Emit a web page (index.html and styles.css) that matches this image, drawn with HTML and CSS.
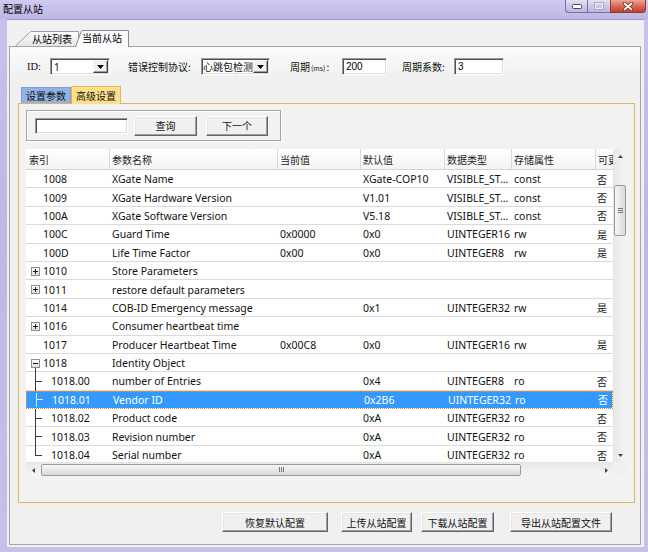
FILE: index.html
```html
<!DOCTYPE html>
<html>
<head>
<meta charset="utf-8">
<title>配置从站</title>
<link rel="stylesheet" href="styles.css">
</head>
<body>
<div class="window">
  <div class="titlebar">
    <span class="title">配置从站</span>
    <div class="controls">
      <div class="wbtn wmin"><svg width="10" height="5" viewBox="0 0 10 5"><rect x="0.5" y="0.5" width="9" height="4" rx="1" fill="#fff" stroke="#4a4768"/></svg></div>
      <div class="wbtn wmax"><svg width="10" height="8" viewBox="0 0 10 8"><rect x="0.5" y="0.5" width="9" height="7" fill="none" stroke="#a9a7c6"/><rect x="1.5" y="1.5" width="7" height="5" fill="none" stroke="#eeedf7"/></svg></div>
      <div class="wbtn wclose"><svg width="12" height="9" viewBox="0 0 12 9"><path d="M2.5 1.5 L9.5 7.5 M9.5 1.5 L2.5 7.5" stroke="#6b2a22" stroke-width="3.4" stroke-linecap="round"/><path d="M2.5 1.5 L9.5 7.5 M9.5 1.5 L2.5 7.5" stroke="#fff" stroke-width="1.8" stroke-linecap="round"/></svg></div>
    </div>
  </div>
  <div class="frame">
    <div class="client">
      <div class="otabs">
        <div class="otab otab-1">
          <svg class="tabshape" width="64" height="15" viewBox="0 0 64 15"><defs><linearGradient id="g1" x1="0" y1="0" x2="0" y2="1"><stop offset="0" stop-color="#fdfdfd"/><stop offset="1" stop-color="#e6e6e6"/></linearGradient></defs><path d="M0.5 15 L14.5 1.6 Q15.6 0.5 17 0.5 L63.5 0.5 L63.5 15" fill="url(#g1)" stroke="#9c9c9c"/></svg>
          <span class="otab-label">从站列表</span>
        </div>
        <div class="otab otab-2">
          <svg class="tabshape" width="54" height="17" viewBox="0 0 54 17"><path d="M0.5 17 L6 1.8 Q6.6 0.5 8 0.5 L53.5 0.5 L53.5 17" fill="#fbfbfb" stroke="#8a8a8a"/></svg>
          <span class="otab-label">当前从站</span>
        </div>
      </div>
      <div class="opanel">
        <div class="params">
          <span class="lbl lbl-id">ID:</span>
          <div class="sel sel1"><span class="sel-text">1</span><span class="drop"><svg width="7" height="4" viewBox="0 0 7 4"><path d="M0 0 H7 L3.5 4 Z" fill="#000"/></svg></span></div>
          <span class="lbl lbl-proto">错误控制协议:</span>
          <div class="sel sel2"><span class="sel-text cjk">心跳包检测</span><span class="drop"><svg width="7" height="4" viewBox="0 0 7 4"><path d="M0 0 H7 L3.5 4 Z" fill="#000"/></svg></span></div>
          <span class="lbl lbl-period">周期<span class="ms">(ms)</span>:</span>
          <div class="inp in1">200</div>
          <span class="lbl lbl-factor">周期系数:</span>
          <div class="inp in2">3</div>
        </div>
        <div class="itabs">
          <div class="itab itab-blue">设置参数</div>
          <div class="itab itab-yellow">高级设置</div>
        </div>
        <div class="ipanel">
          <div class="group">
            <div class="inp search"></div>
            <div class="btn btn-query">查询</div>
            <div class="btn btn-next">下一个</div>
          </div>
          <div class="lv">
            <div class="lv-top">
              <div class="lv-content">
                <div class="hdr">
                  <div class="c c1">索引</div>
                  <div class="c c2">参数名称</div>
                  <div class="c c3">当前值</div>
                  <div class="c c4">默认值</div>
                  <div class="c c5">数据类型</div>
                  <div class="c c6">存储属性</div>
                  <div class="c c7">可更改</div>
                </div>
                <div class="row"><div class="c c1">1008</div><div class="c c2">XGate Name</div><div class="c c3"></div><div class="c c4">XGate-COP10</div><div class="c c5">VISIBLE_ST...</div><div class="c c6">const</div><div class="c c7">否</div></div>
                <div class="row"><div class="c c1">1009</div><div class="c c2">XGate Hardware Version</div><div class="c c3"></div><div class="c c4">V1.01</div><div class="c c5">VISIBLE_ST...</div><div class="c c6">const</div><div class="c c7">否</div></div>
                <div class="row"><div class="c c1">100A</div><div class="c c2">XGate Software Version</div><div class="c c3"></div><div class="c c4">V5.18</div><div class="c c5">VISIBLE_ST...</div><div class="c c6">const</div><div class="c c7">否</div></div>
                <div class="row"><div class="c c1">100C</div><div class="c c2">Guard Time</div><div class="c c3">0x0000</div><div class="c c4">0x0</div><div class="c c5">UINTEGER16</div><div class="c c6">rw</div><div class="c c7">是</div></div>
                <div class="row"><div class="c c1">100D</div><div class="c c2">Life Time Factor</div><div class="c c3">0x00</div><div class="c c4">0x0</div><div class="c c5">UINTEGER8</div><div class="c c6">rw</div><div class="c c7">是</div></div>
                <div class="row"><div class="c c1 t"><span class="exp plus"></span>1010</div><div class="c c2">Store Parameters</div><div class="c c3"></div><div class="c c4"></div><div class="c c5"></div><div class="c c6"></div><div class="c c7"></div></div>
                <div class="row"><div class="c c1 t"><span class="exp plus"></span>1011</div><div class="c c2">restore default parameters</div><div class="c c3"></div><div class="c c4"></div><div class="c c5"></div><div class="c c6"></div><div class="c c7"></div></div>
                <div class="row"><div class="c c1">1014</div><div class="c c2">COB-ID Emergency message</div><div class="c c3"></div><div class="c c4">0x1</div><div class="c c5">UINTEGER32</div><div class="c c6">rw</div><div class="c c7">是</div></div>
                <div class="row"><div class="c c1 t"><span class="exp plus"></span>1016</div><div class="c c2">Consumer heartbeat time</div><div class="c c3"></div><div class="c c4"></div><div class="c c5"></div><div class="c c6"></div><div class="c c7"></div></div>
                <div class="row"><div class="c c1">1017</div><div class="c c2">Producer Heartbeat Time</div><div class="c c3">0x00C8</div><div class="c c4">0x0</div><div class="c c5">UINTEGER16</div><div class="c c6">rw</div><div class="c c7">是</div></div>
                <div class="row open"><div class="c c1 t"><span class="exp"></span>1018</div><div class="c c2">Identity Object</div><div class="c c3"></div><div class="c c4"></div><div class="c c5"></div><div class="c c6"></div><div class="c c7"></div></div>
                <div class="row child"><div class="c c1">1018.00</div><div class="c c2">number of Entries</div><div class="c c3"></div><div class="c c4">0x4</div><div class="c c5">UINTEGER8</div><div class="c c6">ro</div><div class="c c7">否</div></div>
                <div class="row child sel"><div class="c c1">1018.01</div><div class="c c2">Vendor ID</div><div class="c c3"></div><div class="c c4">0x2B6</div><div class="c c5">UINTEGER32</div><div class="c c6">ro</div><div class="c c7">否</div></div>
                <div class="row child"><div class="c c1">1018.02</div><div class="c c2">Product code</div><div class="c c3"></div><div class="c c4">0xA</div><div class="c c5">UINTEGER32</div><div class="c c6">ro</div><div class="c c7">否</div></div>
                <div class="row child"><div class="c c1">1018.03</div><div class="c c2">Revision number</div><div class="c c3"></div><div class="c c4">0xA</div><div class="c c5">UINTEGER32</div><div class="c c6">ro</div><div class="c c7">否</div></div>
                <div class="row child last"><div class="c c1">1018.04</div><div class="c c2">Serial number</div><div class="c c3"></div><div class="c c4">0xA</div><div class="c c5">UINTEGER32</div><div class="c c6">ro</div><div class="c c7">否</div></div>
              </div>
              <div class="vscroll">
                <div class="sarrow"><svg width="5" height="3" viewBox="0 0 5 3"><path d="M0 3 L2.5 0 L5 3 Z" fill="#444"/></svg></div>
                <div class="vtrack"><div class="vthumb"><svg width="5" height="5" viewBox="0 0 5 5"><path d="M0 0.5 H5 M0 2.5 H5 M0 4.5 H5" stroke="#777" stroke-width="1"/></svg></div></div>
                <div class="sarrow"><svg width="5" height="3" viewBox="0 0 5 3"><path d="M0 0 L2.5 3 L5 0 Z" fill="#444"/></svg></div>
              </div>
            </div>
            <div class="lv-bottom">
              <div class="hscroll">
                <div class="sarrow h"><svg width="3" height="5" viewBox="0 0 3 5"><path d="M3 0 L0 2.5 L3 5 Z" fill="#444"/></svg></div>
                <div class="htrack"><div class="hthumb"><svg width="5" height="5" viewBox="0 0 5 5"><path d="M0.5 0 V5 M2.5 0 V5 M4.5 0 V5" stroke="#777" stroke-width="1"/></svg></div></div>
                <div class="sarrow h"><svg width="3" height="5" viewBox="0 0 3 5"><path d="M0 0 L3 2.5 L0 5 Z" fill="#444"/></svg></div>
              </div>
              <div class="corner"></div>
            </div>
          </div>
        </div>
        <div class="bbar">
          <div class="btn bb1">恢复默认配置</div>
          <div class="btn bb2">上传从站配置</div>
          <div class="btn bb3">下载从站配置</div>
          <div class="btn bb4">导出从站配置文件</div>
        </div>
      </div>
    </div>
  </div>
</div>
</body>
</html>
```
FILE: styles.css
```css
* { box-sizing: border-box; }
html, body { margin: 0; padding: 0; }
body {
  width: 648px;
  height: 552px;
  overflow: hidden;
  background: #c6c2e6;
  font-family: "Noto Sans", "Noto Sans CJK SC", sans-serif;
  font-size: 10.5px;
  color: #111;
}
.cjk { font-family: "Noto Sans CJK SC", sans-serif; font-size: 10px; }

.window {
  width: 648px;
  height: 552px;
  display: flex;
  flex-direction: column;
  background: linear-gradient(to bottom, #c8c3ec, #beb8e4 40%, #c6c1e8);
}
.titlebar {
  height: 19px;
  flex: none;
  display: flex;
  align-items: flex-start;
  background: linear-gradient(to bottom, #d0cbf0, #bdb6e5);
}
.title {
  font-family: "Noto Sans CJK SC", sans-serif;
  font-size: 10px;
  line-height: 17px;
  padding-left: 3px;
  color: #000;
}
.controls { margin-left: auto; margin-right: 2px; display: flex; }
.wbtn {
  height: 13px;
  display: flex;
  align-items: center;
  justify-content: center;
  border: 1px solid #75729a;
  border-top: none;
}
.wmin {
  width: 22px;
  border-right: none;
  border-radius: 0 0 0 4px;
  background: linear-gradient(to bottom, #e4e2f4, #cbc8e6 50%, #bdb9de);
}
.wmax {
  width: 23px;
  border-right: none;
  background: linear-gradient(to bottom, #e4e2f4, #cbc8e6 50%, #bdb9de);
}
.wclose {
  width: 36px;
  border-color: #8c3c33;
  border-radius: 0 0 4px 0;
  background: linear-gradient(to bottom, #eaa598, #d86a56 50%, #c4402c);
}

.frame {
  flex: 1;
  display: flex;
  padding: 0 4px 5px 7px;
}
.client {
  flex: 1;
  background: #f0f0f0;
  border-top: 1px solid #9d99c4;
  padding: 10px 3px 2px 2px;
  display: flex;
  flex-direction: column;
}

/* outer tabs */
.otabs {
  display: flex;
  align-items: flex-end;
  height: 17px;
  flex: none;
  margin-bottom: -1px;
  padding-left: 6px;
  position: relative;
  z-index: 1;
}
.otab {
  position: relative;
  display: flex;
  align-items: center;
  font-family: "Noto Sans CJK SC", sans-serif;
  font-size: 10px;
  color: #000;
}
.tabshape { position: absolute; left: 0; top: 0; }
.otab-label { position: relative; }
.otab-1 { width: 64px; height: 15px; margin-bottom: 1px; padding-left: 17px; }
.otab-2 { width: 54px; height: 17px; margin-left: -4px; padding-left: 7px; padding-bottom: 2px; }

.opanel {
  flex: 1;
  border: 1px solid #a5a5a5;
  background: linear-gradient(to bottom, #fbfbfb, #f0f0f0 30px);
  display: flex;
  flex-direction: column;
}

/* parameter row */
.params {
  display: flex;
  align-items: center;
  height: 17px;
  margin: 11px 0 0 17px;
}
.lbl {
  font-family: "Noto Sans CJK SC", sans-serif;
  font-size: 10px;
  color: #111;
  white-space: nowrap;
}
.lbl-id { width: 23px; font-family: "Liberation Serif", serif; font-size: 10.5px; }
.lbl-proto { width: 73px; margin-left: 18px; }
.lbl-period { width: 52px; margin-left: 20px; }
.lbl-factor { width: 52px; margin-left: 15px; }
.ms { font-size: 7px; margin: 0 1px; }

.sel, .inp {
  height: 17px;
  background: #fff;
  border: 1px solid;
  border-color: #9a9a9a #fff #fff #9a9a9a;
  box-shadow: inset 1px 1px #505050, inset -1px -1px #dcdcdc;
}
.sel { display: flex; align-items: center; }
.sel1 { width: 60px; }
.sel2 { width: 69px; }
.sel-text { flex: 1; padding-left: 3px; font-size: 10px; white-space: nowrap; }
.sel2 .sel-text { padding-left: 1px; }
.drop {
  width: 15px;
  height: 13px;
  flex: none;
  margin-right: 1px;
  background: #f0f0f0;
  border: 1px solid;
  border-color: #f8f8f8 #404040 #404040 #f8f8f8;
  box-shadow: inset -1px -1px #a0a0a0;
  display: flex;
  align-items: center;
  justify-content: center;
}
.inp {
  font-family: "Liberation Sans", sans-serif;
  font-size: 10px;
  line-height: 15px;
  padding-left: 3px;
  color: #000;
}
.in1 { width: 45px; }
.in2 { width: 50px; }

/* inner tabs */
.itabs {
  display: flex;
  align-items: flex-end;
  height: 18px;
  flex: none;
  margin: 11px 0 -1px 11px;
  position: relative;
  z-index: 1;
}
.itab {
  width: 50px;
  display: flex;
  align-items: center;
  justify-content: center;
  font-family: "Noto Sans CJK SC", sans-serif;
  font-size: 10px;
  color: #111;
  border: 1px solid;
  border-bottom: none;
}
.itab-blue { height: 16px; margin-bottom: 1px; background: #90b2e6; border-color: #7f9fd2; }
.itab-yellow { height: 18px; background: #ffdf8c; border-color: #dcb85a; }

.ipanel {
  flex: none;
  height: 400px;
  margin: 0 5px 0 8px;
  border: 1px solid #dcb85a;
  background: #f2f2f2;
  display: flex;
  flex-direction: column;
  padding: 6px 0 0 7px;
}

/* search group */
.group {
  width: 255px;
  height: 31px;
  flex: none;
  border: 1px solid #a3a3a3;
  box-shadow: inset 1px 1px #fff, 1px 1px #fff;
  display: flex;
  align-items: center;
  padding-left: 8px;
}
.search { width: 93px; height: 16px; }
.btn {
  height: 20px;
  display: flex;
  align-items: center;
  justify-content: center;
  background: #f0f0f0;
  border: 1px solid;
  border-color: #fff #656565 #656565 #fff;
  box-shadow: inset -1px -1px #a0a0a0, inset 1px 1px #e6e6e6;
  font-family: "Noto Sans CJK SC", sans-serif;
  font-size: 10px;
  color: #111;
  white-space: nowrap;
}
.btn-query { width: 63px; margin-left: 6px; }
.btn-next { width: 62px; margin-left: 9px; }

/* list view */
.lv {
  width: 601px;
  height: 327px;
  flex: none;
  margin-top: 8px;
  display: flex;
  flex-direction: column;
  background: #fff;
}
.lv-top { display: flex; height: 313px; }
.lv-content { flex: 1; overflow: hidden; }
.hdr {
  display: flex;
  height: 21px;
  background: linear-gradient(to bottom, #ffffff, #f4f4f4);
  border-bottom: 1px solid #d5d5d5;
}
.hdr .c {
  display: flex;
  align-items: center;
  font-family: "Noto Sans CJK SC", sans-serif;
  font-size: 10px;
  color: #1e1e1e;
}
.hdr .c + .c { border-left: 1px solid #d9d9d9; padding-left: 2px; }
.c {
  flex: none;
  padding-left: 3px;
  white-space: nowrap;
  overflow: hidden;
}
.c1 { width: 83px; }
.c2 { width: 168px; }
.c3 { width: 83px; }
.c4 { width: 84px; }
.c5 { width: 67px; }
.c6 { width: 84px; }
.c7 { width: 60px; }

.row {
  display: flex;
  height: 18.4px;
  box-shadow: inset 0 -1px #dadada;
}
.row .c { display: flex; align-items: center; }
.row .c1 { padding-left: 17px; }
.row .c1.t { padding-left: 5px; }
.row .c7 { font-family: "Noto Sans CJK SC", sans-serif; font-size: 10px; padding-left: 2px; }

.exp {
  width: 9px;
  height: 9px;
  flex: none;
  margin-right: 3px;
  border: 1px solid #8e8f8f;
  background:
    linear-gradient(#1a1a1a, #1a1a1a) center / 5px 1px no-repeat,
    linear-gradient(to bottom, #ffffff, #dcdcdc);
}
.exp.plus {
  background:
    linear-gradient(#1a1a1a, #1a1a1a) center / 5px 1px no-repeat,
    linear-gradient(#1a1a1a, #1a1a1a) center / 1px 5px no-repeat,
    linear-gradient(to bottom, #ffffff, #dcdcdc);
}
.row.open .c1 {
  background: linear-gradient(#3a3a3a, #3a3a3a) 9px 100% / 1px 4px no-repeat;
}
.row.child .c1 {
  padding-left: 25px;
  background:
    linear-gradient(#3a3a3a, #3a3a3a) 9px 0 / 1px 100% no-repeat,
    linear-gradient(#3a3a3a, #3a3a3a) 9px 50% / 7px 1px no-repeat;
}
.row.child.last .c1 {
  background:
    linear-gradient(#3a3a3a, #3a3a3a) 9px 0 / 1px 50% no-repeat,
    linear-gradient(#3a3a3a, #3a3a3a) 9px 50% / 7px 1px no-repeat;
}
.row.sel {
  background: #3399ff;
  color: #fff;
  box-shadow: none;
  outline: 1px dotted #c98a48;
  outline-offset: -1px;
}
.row.child.sel .c1 {
  background:
    linear-gradient(#dcebff, #dcebff) 9px 0 / 1px 100% no-repeat,
    linear-gradient(#dcebff, #dcebff) 9px 50% / 7px 1px no-repeat;
}

/* scrollbars */
.vscroll {
  width: 14px;
  flex: none;
  display: flex;
  flex-direction: column;
  background: linear-gradient(to right, #e9e9e9, #f5f5f5);
  border-left: 1px solid #e4e4e4;
}
.sarrow {
  height: 14px;
  flex: none;
  display: flex;
  align-items: center;
  justify-content: center;
}
.sarrow.h { width: 14px; height: 14px; }
.vtrack { flex: 1; padding: 22px 0 0 0; }
.vthumb {
  width: 12px;
  height: 51px;
  border: 1px solid #9a9a9a;
  border-radius: 2px;
  background: linear-gradient(to right, #f6f6f6, #e8e8e8 50%, #d8d8d8);
  display: flex;
  align-items: center;
  justify-content: center;
}
.lv-bottom { display: flex; height: 14px; flex: none; }
.hscroll {
  flex: 1;
  display: flex;
  background: linear-gradient(to bottom, #e9e9e9, #f5f5f5);
  border-top: 1px solid #e4e4e4;
}
.htrack { flex: 1; display: flex; align-items: center; padding-left: 1px; }
.hthumb {
  width: 480px;
  height: 12px;
  border: 1px solid #9a9a9a;
  border-radius: 2px;
  background: linear-gradient(to bottom, #f6f6f6, #e8e8e8 50%, #d8d8d8);
  display: flex;
  align-items: center;
  justify-content: center;
}
.corner { width: 14px; flex: none; background: #f0f0f0; }

/* bottom buttons */
.bbar {
  display: flex;
  height: 20px;
  flex: none;
  margin-top: 9px;
}
.bb1 { width: 106px; margin-left: 212px; }
.bb2 { width: 71px; margin-left: 13px; }
.bb3 { width: 73px; margin-left: 9px; }
.bb4 { width: 102px; margin-left: 16px; }
```
